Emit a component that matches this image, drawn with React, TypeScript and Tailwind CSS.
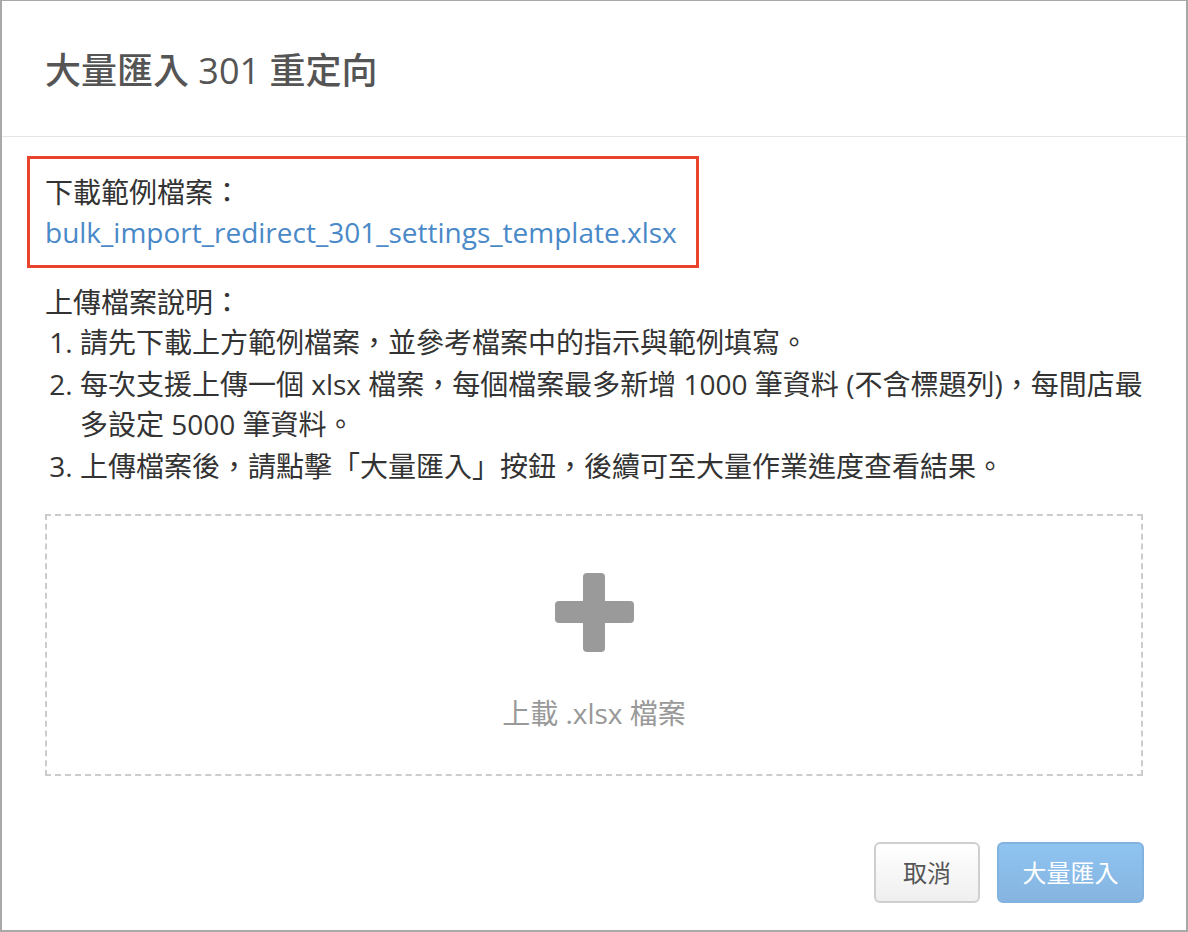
const FONT = "font-['Open_Sans','Noto_Sans_CJK_TC',sans-serif]";

function PlusIcon() {
  return (
    <svg width="79" height="79" viewBox="0 0 79 79" className="block">
      <rect x="0" y="28" width="79" height="22" rx="4" fill="#9a9a9a" />
      <rect x="28" y="0" width="22" height="79" rx="4" fill="#9a9a9a" />
    </svg>
  );
}

export default function App() {
  return (
    <div className={`${FONT} w-[1188px] h-[932px] bg-white border-[#a9a9a9] border-t border-l-2 border-r-2 border-b-2 flex flex-col text-[28px] leading-[40px] text-[#333]`}>
      {/* Header */}
      <div className="h-[136px] border-b border-[#e5e5e5] flex items-center pl-[43px] pt-1 shrink-0">
        <h4 className="text-[36px] font-medium text-[#555]">大量匯入 301 重定向</h4>
      </div>

      {/* Body */}
      <div className="px-[43px] flex flex-col">
        <div className="mt-[19px] -ml-[18px] w-fit border-[3px] border-[#e8432b] pl-[15px] pr-[19px] pt-[13px] pb-[13px]">
          <p>下載範例檔案：</p>
          <a className="text-[#4a89c8] block">bulk_import_redirect_301_settings_template.xlsx</a>
        </div>

        <p className="mt-[14px]">上傳檔案說明：</p>
        <ol className="list-decimal pl-[35px] -mr-[30px] flex flex-col gap-[2px]">
          <li>請先下載上方範例檔案，並參考檔案中的指示與範例填寫。</li>
          <li>
            <span className="whitespace-nowrap">每次支援上傳一個 xlsx 檔案，每個檔案最多新增 1000 筆資料 (不含標題列)，每間店最</span>
            <br />
            多設定 5000 筆資料。
          </li>
          <li>上傳檔案後，請點擊「大量匯入」按鈕，後續可至大量作業進度查看結果。</li>
        </ol>

        {/* Upload zone */}
        <div className="mt-[28px] h-[262px] border-2 border-dashed border-[#cccccc] flex flex-col items-center pt-[57px]">
          <PlusIcon />
          <span className="mt-[41px] text-[#999]">上載 .xlsx 檔案</span>
        </div>
      </div>

      {/* Footer */}
      <div className="mt-[66px] pr-[42px] flex justify-end gap-[17px] text-[24px]">
        <button className="w-[106px] h-[61px] rounded-[6px] border-2 border-[#cfcfcf] bg-gradient-to-b from-white to-[#efefef] text-[#555]">
          取消
        </button>
        <button className="w-[147px] h-[61px] rounded-[6px] border-2 border-[#82b2de] bg-gradient-to-b from-[#8fc4f1] to-[#86b4e0] text-white">
          大量匯入
        </button>
      </div>
    </div>
  );
}
